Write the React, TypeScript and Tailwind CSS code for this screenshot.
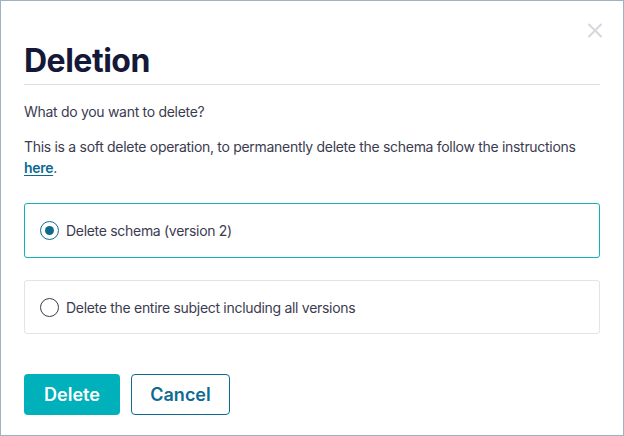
import React from "react";

export default function App() {
  return (
    <div
      className="relative w-[624px] h-[436px] border border-[#9db3c1] bg-white overflow-hidden"
      style={{ fontFamily: "Inter, 'Noto Sans', sans-serif" }}
    >
      <button className="absolute left-[586px] top-[22px] w-[16px] h-[15px] flex items-center justify-center">
        <svg width="16" height="15" viewBox="0 0 16 15">
          <path d="M2 1.5 L14 13.5 M14 1.5 L2 13.5" stroke="#d6d6de" strokeWidth="2" strokeLinecap="round" />
        </svg>
      </button>
      <div className="px-[23px] pt-[41px] flex flex-col">
        <h2 className="text-[32px] leading-[38px] font-bold text-[#151838] pb-[4px] border-b border-[#dedee6] tracking-[-0.5px]">
          Deletion
        </h2>
        <p className="mt-[16px] text-[14px] leading-[21px] text-[#3b3b4f] tracking-[-0.3px]">What do you want to delete?</p>
        <p className="mt-[14px] text-[14px] leading-[21px] text-[#3b3b4f] tracking-[-0.3px]">
          This is a soft delete operation, to permanently delete the schema follow the instructions{" "}
          <a className="font-semibold text-[#0b6a8f] underline underline-offset-2">here</a>.
        </p>
        <label className="mt-[25px] h-[55px] flex items-center gap-[7px] px-[15px] border border-[#13b0bc] rounded-[3px]">
          <span className="w-[19px] h-[19px] rounded-full border-[1.5px] border-[#146c93] flex items-center justify-center">
            <span className="w-[9px] h-[9px] rounded-full bg-[#0f6a8e]" />
          </span>
          <span className="text-[14px] text-[#3b3b4f] tracking-[-0.3px]">Delete schema (version 2)</span>
        </label>
        <label className="mt-[22px] h-[54px] flex items-center gap-[7px] px-[15px] border border-[#e2e2e8] rounded-[3px]">
          <span className="w-[19px] h-[19px] rounded-full border-[1.5px] border-[#3b3b4f]" />
          <span className="text-[14px] text-[#3b3b4f] tracking-[-0.3px]">Delete the entire subject including all versions</span>
        </label>
        <div className="mt-[40px] flex gap-[11px]">
          <button className="w-[96px] h-[41px] rounded-[4px] bg-[#00b0bb] text-white text-[18px] font-semibold">
            Delete
          </button>
          <button className="w-[99px] h-[41px] rounded-[4px] border border-[#0f6a92] text-[#0f6a92] text-[18px] font-semibold">
            Cancel
          </button>
        </div>
      </div>
    </div>
  );
}
